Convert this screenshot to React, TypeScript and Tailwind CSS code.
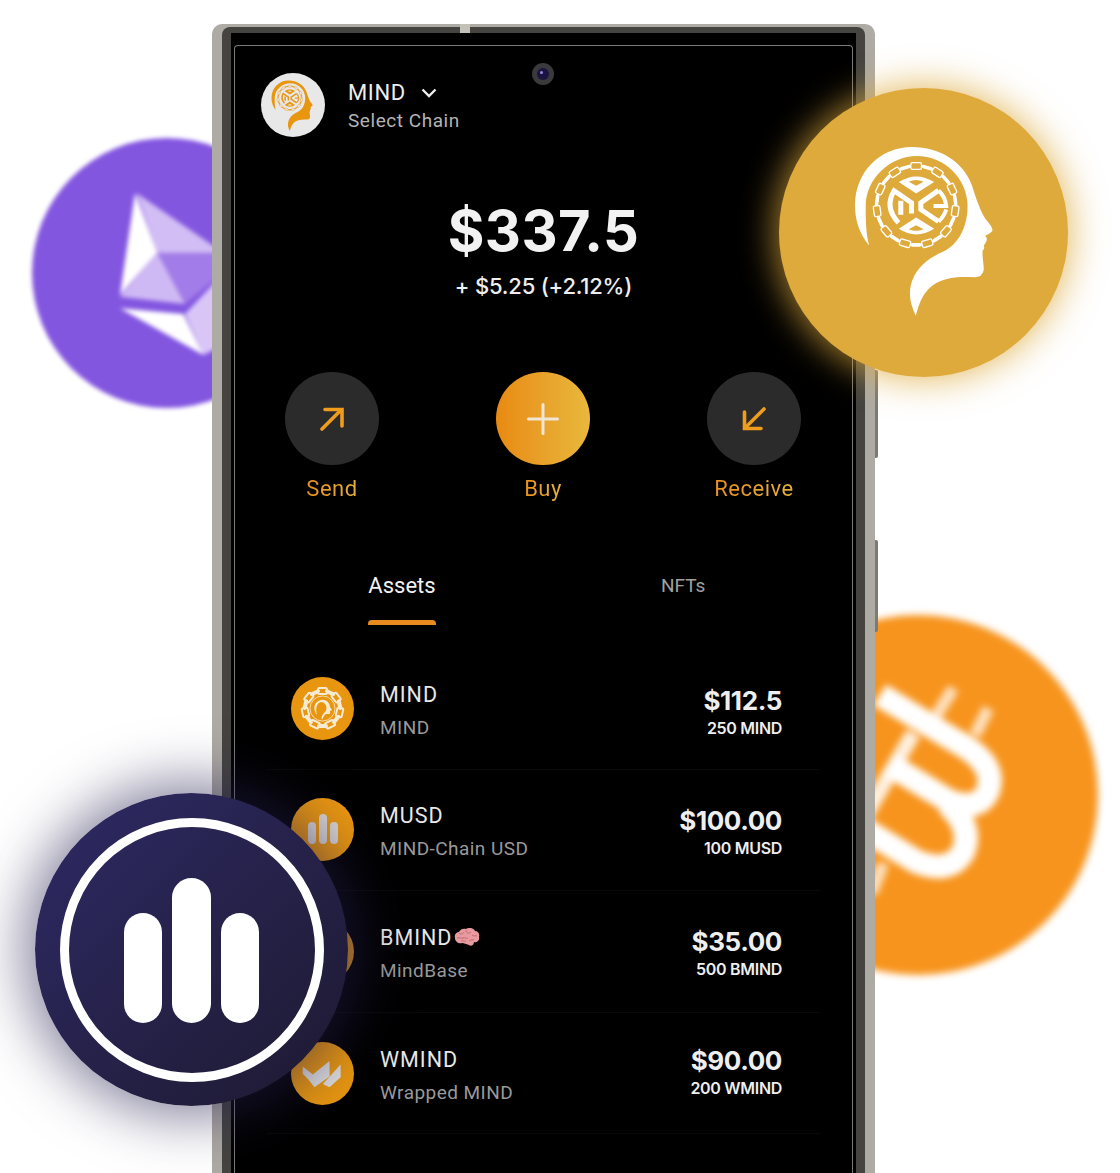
import React from 'react'

// links alternate between an open one and one seen from the side
const ChainRing = ({ cx, cy, r, n, w, h, stroke, sw }: { cx: number; cy: number; r: number; n: number; w: number; h: number; stroke: string; sw: number }) => (
  <g fill="none" stroke={stroke} strokeWidth={sw}>
    {Array.from({ length: n }).map((_, i) => {
      const a = (i * 360) / n
      const side = i % 2 === 1
      return (
        <rect
          key={i}
          x={cx - w / 2}
          y={cy - r - (side ? h / 6 : h / 2)}
          width={w}
          height={side ? h / 3 : h}
          rx={h / 4}
          fill={side ? stroke : 'none'}
          transform={`rotate(${a} ${cx} ${cy})`}
        />
      )
    })}
  </g>
)

// head with the chain wheel inside, coordinates are from a 930 wide crop
const HeadLogo = ({ fg, bg, className }: { fg: string; bg: string; className: string }) => (
  <svg viewBox="240 190 440 530" className={className}>
    <path
      fill={fg}
      d="M297 500 C265 460 255 420 255 380 C255 280 330 205 425 205 C510 205 580 250 605 320 C615 350 625 385 645 420 Q672 450 665 458 Q655 468 645 470 Q652 480 648 488 Q645 495 640 500 Q645 510 637 515 C635 535 642 560 640 575 Q635 595 615 595 C560 592 510 595 475 630 Q450 655 437 710 C420 675 412 640 428 600 C445 560 480 535 520 518 C565 495 592 445 592 380 A152 152 0 0 0 440 232 C360 232 288 300 287 380 C287 420 287 460 297 500Z"
    />
    <ChainRing cx={438} cy={380} r={118} n={22} w={32} h={20} stroke={fg} sw={4} />
    <path fill={fg} d="M386 310 Q438 276 492 310 L438 344 Z" />
    <path fill={bg} d="M416 309 L438 321 L460 309 Q438 299 416 309Z" />
    <path fill={fg} d="M386 450 Q438 484 492 450 L438 416 Z" />
    <path fill={bg} d="M416 451 L438 439 L460 451 Q438 461 416 451Z" />
    <g fill="none" stroke={fg} strokeWidth={15}>
      <path d="M385 432 Q342 385 372 336 L424 372 V404" />
      <path d="M392 408 V366" />
      <path d="M505 335 L452 372 V392 L505 428" />
      <path d="M505 335 Q526 355 528 382 H490" strokeWidth={12} />
      <path d="M505 428 Q522 412 528 392" strokeWidth={12} />
    </g>
  </svg>
)

const TokenMind = () => (
  <div className="flex h-[63px] w-[63px] shrink-0 items-center justify-center rounded-full bg-[#e8960f]">
    <svg viewBox="0 0 63 63" className="h-[63px] w-[63px]">
      <ChainRing cx={31.5} cy={31.5} r={17.5} n={14} w={9} h={6} stroke="#f7ead2" sw={2} />
      <circle cx={31.5} cy={31.5} r={12.5} fill="none" stroke="#f7ead2" strokeWidth={0.8} />
      <path
        fill="#f7ead2"
        d="M26 38 C22 33 22 25 30 23 C36 22 39 27 39 30 L41 33 L39 34 L39 37 L35 37 C33 38 32 41 31 43 C30 40 31 38 33 36 C37 33 36 26 31 25 C26 25 24 31 26 38Z"
      />
    </svg>
  </div>
)

const TokenMusd = () => (
  <div className="flex h-[63px] w-[63px] shrink-0 items-end justify-center gap-[3px] rounded-full bg-[#e8960f] pb-[17px]">
    <div className="h-[22px] w-[8px] rounded-full bg-[#d8d5d2]" />
    <div className="h-[30px] w-[8px] rounded-full bg-[#d8d5d2]" />
    <div className="h-[22px] w-[8px] rounded-full bg-[#d8d5d2]" />
  </div>
)

const TokenBmind = () => <div className="h-[63px] w-[63px] shrink-0 rounded-full bg-[#c98a1e]" />

const TokenWmind = () => (
  <div className="h-[63px] w-[63px] shrink-0 rounded-full bg-[#e6960f]">
    <svg viewBox="35 395 188 188" className="h-[63px] w-[63px]">
      <polygon fill="#dcdcdc" points="70,468 100,492 150,452 150,498 105,530 85,505 70,490" />
      <polygon fill="#dcdcdc" points="130,520 183,462 183,500 150,530" />
    </svg>
  </div>
)

const Brain = () => (
  <svg viewBox="0 0 26 19" className="ml-[2px] h-[19px] w-[26px]">
    <path
      fill="#e79a9f"
      d="M1 10 C0 6 3 4 5 4 C6 1 10 0 12 1 C15 -1 20 0 21 3 C24 3 26 6 25 9 C26 12 23 15 20 14 C20 17 17 19 15 17 C12 16 10 15 8 15 C5 16 1 14 1 10Z"
    />
    <g fill="none" stroke="#c4686f" strokeWidth="1">
      <path d="M5 5 C7 7 9 6 10 4" />
      <path d="M12 2 C12 5 15 6 17 4" />
      <path d="M3 10 C6 9 7 11 9 10 C11 9 12 11 14 10" />
      <path d="M18 7 C20 9 22 7 23 8" />
      <path d="M15 13 C17 11 19 13 20 11" />
      <path d="M7 13 C9 12 10 14 12 13" />
    </g>
  </svg>
)

const assets = [
  { icon: <TokenMind />, name: 'MIND', sub: 'MIND', value: '$112.5', amount: '250 MIND', right: 'mt-[8px]' },
  { icon: <TokenMusd />, name: 'MUSD', sub: 'MIND-Chain USD', value: '$100.00', amount: '100 MUSD', right: 'mt-[5px]' },
  { icon: <TokenBmind />, name: 'BMIND', sub: 'MindBase', value: '$35.00', amount: '500 BMIND', brain: true, right: 'mt-[4px]' },
  { icon: <TokenWmind />, name: 'WMIND', sub: 'Wrapped MIND', value: '$90.00', amount: '200 WMIND', right: '-mt-[3px]' },
]

const gradientText = 'bg-linear-to-r from-[#ea8f1c] to-[#e6b23c] bg-clip-text text-[22px] leading-[26px] tracking-[0.5px] whitespace-nowrap text-transparent'

export default function App() {
  return (
    <div className="relative h-[1173px] w-[1120px] overflow-hidden bg-white pt-6 pl-[212px] font-[Roboto,sans-serif]">
      {/* ETH coin behind the phone */}
      <div className="absolute top-[138px] left-[32px] h-[270px] w-[270px] rounded-full bg-[#8356e0] blur-[2px]">
        <svg viewBox="36 24 810 810" className="h-full w-full">
          <polygon fill="#d2bdf5" points="350,190 620,375 412,368" />
          <polygon fill="#ffffff" points="345,190 412,368 300,495" />
          <polygon fill="#cfb9f4" points="412,368 300,500 495,522" />
          <polygon fill="#a27ce8" points="412,368 620,368 620,420 495,522" />
          <polygon fill="#ffffff" points="300,535 490,552 550,675" />
          <polygon fill="#d9c6f7" points="495,552 620,420 620,640 550,675" />
        </svg>
      </div>

      {/* BTC coin behind the phone */}
      <div className="absolute top-[615px] left-[738px] h-[360px] w-[360px] rounded-full bg-[#f7941d] blur-[3.5px]">
        <svg viewBox="-336 45 1080 1080" className="h-full w-full">
          <g fill="none" stroke="#ffffff">
            <path strokeWidth={72} d="M90 285 L320 425 Q440 490 415 570 Q390 635 300 605 L120 495" />
            <path strokeWidth={72} d="M290 610 Q370 680 340 755 Q300 825 200 785 L30 680" />
            <path strokeWidth={46} strokeOpacity={0.85} d="M190 400 L50 640" />
            <path strokeWidth={36} strokeOpacity={0.7} d="M310 265 L260 345" />
            <path strokeWidth={36} strokeOpacity={0.7} d="M415 325 L375 405" />
            <path strokeWidth={36} strokeOpacity={0.7} d="M100 790 L65 880" />
          </g>
        </svg>
      </div>

      {/* phone */}
      <div className="relative z-10 h-[1300px] w-[663px] rounded-t-[10px] bg-[#aeaba4] px-[10px] pt-[3px]">
        <div className="absolute top-0 left-[248px] h-[9px] w-[10px] bg-[#c4c1b8]" />
        <div className="absolute top-[346px] right-[-3px] h-[88px] w-[3px] rounded-r-[2px] bg-[#7d7a72]" />
        <div className="absolute top-[516px] right-[-3px] h-[92px] w-[3px] rounded-r-[2px] bg-[#7d7a72]" />
        <div className="h-full rounded-t-[8px] bg-[#454440] px-[9px] pt-[6px]">
          <div className="h-full bg-black px-[3px] pt-[12px]">
            <div className="relative h-full rounded-t-[4px] border-x border-t border-[#7a7a7a] bg-black">
              {/* camera */}
              <div className="absolute top-[17px] left-[297px] flex h-[22px] w-[22px] items-center justify-center rounded-full bg-[#3a3a3c]">
                <div className="h-[12px] w-[12px] rounded-full bg-[#1a1440]">
                  <div className="mt-[3px] ml-[3px] h-[3px] w-[3px] rounded-full bg-[#9a8ce0]" />
                </div>
              </div>

              {/* header */}
              <div className="flex items-center gap-[23px] pt-[27px] pl-[26px]">
                <div className="flex h-[64px] w-[64px] items-center justify-center rounded-full bg-[#e8e8e8]">
                  <HeadLogo fg="#e8960f" bg="#e8e8e8" className="ml-[-2px] h-[53px] w-[44px]" />
                </div>
                <div className="mt-[1px] flex flex-col">
                  <div className="flex items-center gap-[15px]">
                    <span className="text-[22px] leading-[28px] tracking-[0.6px] text-[#eeeeee]">MIND</span>
                    <svg viewBox="0 0 16 10" className="h-[10px] w-[16px]" fill="none" stroke="#eeeeee" strokeWidth="2.4">
                      <path d="M1.5 1.5 L8 8 L14.5 1.5" />
                    </svg>
                  </div>
                  <span className="mt-[2px] text-[19px] leading-[24px] tracking-[0.55px] text-[#b4b4b4]">Select Chain</span>
                </div>
              </div>

              {/* balance */}
              <div className="mt-[60px] flex flex-col items-center">
                <span className="font-[Inter,sans-serif] text-[56px] leading-[68px] font-bold tracking-[0.5px] text-[#f2f2f2]">$337.5</span>
                <span className="mt-[7px] font-[Inter,sans-serif] text-[22px] leading-[28px] font-medium tracking-[-0.2px] text-[#eeeeee]">+ $5.25 (+2.12%)</span>
              </div>

              {/* actions */}
              <div className="mt-[72px] flex justify-between pr-[51px] pl-[50px]">
                <div className="flex w-[94px] flex-col items-center">
                  <div className="flex h-[93px] w-[94px] items-center justify-center rounded-full bg-[#2b2b2b]">
                    <svg viewBox="0 0 24 24" className="h-[24px] w-[24px]" fill="none" stroke="#f09d1e" strokeWidth="3.6" strokeLinecap="round">
                      <path d="M2 22 L21 3" />
                      <path d="M5 2.5 H22 V19" />
                    </svg>
                  </div>
                  <span className={`mt-[11px] ${gradientText}`}>Send</span>
                </div>
                <div className="flex w-[94px] flex-col items-center">
                  <div className="flex h-[93px] w-[94px] items-center justify-center rounded-full bg-linear-to-r from-[#e88a10] to-[#e8b83c]">
                    <svg viewBox="0 0 32 32" className="h-[32px] w-[32px]" fill="none" stroke="#f1e6d4" strokeWidth="3" strokeLinecap="round">
                      <path d="M16 1.5 V30.5" />
                      <path d="M1.5 16 H30.5" />
                    </svg>
                  </div>
                  <span className={`mt-[11px] ${gradientText}`}>Buy</span>
                </div>
                <div className="flex w-[94px] flex-col items-center">
                  <div className="flex h-[93px] w-[94px] items-center justify-center rounded-full bg-[#2b2b2b]">
                    <svg viewBox="0 0 24 24" className="h-[24px] w-[24px]" fill="none" stroke="#f09d1e" strokeWidth="3.6" strokeLinecap="round">
                      <path d="M22 2 L3 21" />
                      <path d="M2.5 5 V21.5 H19" />
                    </svg>
                  </div>
                  <span className={`mt-[11px] ${gradientText}`}>Receive</span>
                </div>
              </div>

              {/* tabs */}
              <div className="mt-[71px] flex pl-[133px]">
                <div className="flex w-[68px] flex-col items-center">
                  <span className="text-[22px] leading-[26px] whitespace-nowrap text-[#f2f2f2]">Assets</span>
                  <div className="mt-[21px] h-[5px] w-[68px] rounded-t-[4px] bg-[#e98a1e]" />
                </div>
                <span className="ml-[225px] text-[19px] leading-[26px] text-[#a0a0a0]">NFTs</span>
              </div>

              {/* asset list */}
              <div className="mx-[32px] mt-[23px]">
                {assets.map((a) => (
                  <div key={a.name} className="flex h-[121.6px] items-center justify-between border-b border-[#090909] pr-[38px] pl-[24px]">
                    <div className="flex items-center gap-[26px]">
                      {a.icon}
                      <div className="mt-[6px] flex flex-col gap-[9px]">
                        <div className="flex h-[24px] items-center">
                          <span className="text-[21.5px] leading-[24px] tracking-[1px] text-[#e8e8e8]">{a.name}</span>
                          {a.brain && <Brain />}
                        </div>
                        <span className="text-[19px] leading-[24px] tracking-[0.45px] text-[#9a9a9a]">{a.sub}</span>
                      </div>
                    </div>
                    <div className={`flex flex-col items-end font-[Inter,sans-serif] ${a.right}`}>
                      <span className="text-[26px] leading-[32px] font-bold tracking-[-0.4px] text-[#eeeeee]">{a.value}</span>
                      <span className="text-[16px] leading-[22px] font-semibold tracking-[-0.3px] text-[#eeeeee]">{a.amount}</span>
                    </div>
                  </div>
                ))}
              </div>
            </div>
          </div>
        </div>
      </div>

      {/* MIND coin over the phone */}
      <div className="absolute top-[88px] left-[779px] z-20 flex h-[289px] w-[289px] items-center justify-center rounded-full bg-[#deaa3c] shadow-[0_0_34px_4px_rgba(222,170,60,0.75)]">
        <HeadLogo fg="#ffffff" bg="#deaa3c" className="mb-[5px] h-[177px] w-[147px]" />
      </div>

      {/* MUSD coin over the phone */}
      <div className="absolute top-[793px] left-[35px] z-20 flex h-[313px] w-[313px] items-center justify-center rounded-full bg-linear-to-br from-[#2e2a66] to-[#1e1930] shadow-[0_0_55px_12px_rgba(38,33,80,0.55)]">
        <div className="flex h-[264px] w-[264px] items-end justify-center gap-[10px] rounded-full border-[9px] border-white pb-[50px]">
          <div className="h-[110px] w-[38px] rounded-full bg-white" />
          <div className="h-[145px] w-[39px] rounded-full bg-white" />
          <div className="h-[110px] w-[38px] rounded-full bg-white" />
        </div>
      </div>
    </div>
  )
}
